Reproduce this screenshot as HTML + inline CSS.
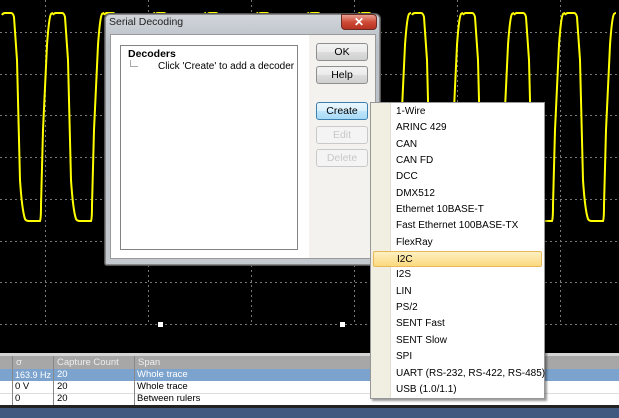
<!DOCTYPE html>
<html><head><meta charset="utf-8"><style>
*{margin:0;padding:0;box-sizing:border-box}
body{width:619px;height:418px;overflow:hidden;background:#000;position:relative;font-family:"Liberation Sans",sans-serif;font-size:11px;color:#000;white-space:nowrap}
.abs{position:absolute}
.btn{position:absolute;left:316px;width:52px;height:18px;border:1px solid #8e8f8f;border-radius:3px;background:linear-gradient(#f2f2f2,#ebebeb 50%,#dddddd 51%,#cfcfcf);text-align:center;line-height:16px;font-size:10.5px}
.dis{color:#c8c8c8;border-color:#c9c9c9;background:#f4f4f4}
.menu div{height:16.35px;line-height:16px;padding-left:25px;font-size:10px;white-space:nowrap}
.tbl div{position:absolute;font-size:9.5px;line-height:12px}
</style></head><body>
<svg class="abs" style="left:0;top:0" width="619" height="360">
<g stroke="#777" stroke-width="1" stroke-dasharray="2,3">
<line x1="0" y1="32.5" x2="619" y2="32.5"/><line x1="0" y1="74.5" x2="619" y2="74.5"/><line x1="0" y1="115.5" x2="619" y2="115.5"/><line x1="0" y1="157.5" x2="619" y2="157.5"/><line x1="0" y1="199.5" x2="619" y2="199.5"/><line x1="0" y1="241.5" x2="619" y2="241.5"/><line x1="0" y1="282.5" x2="619" y2="282.5"/><line x1="0" y1="324.5" x2="619" y2="324.5"/>
<line x1="45.5" y1="0" x2="45.5" y2="325"/><line x1="148.5" y1="0" x2="148.5" y2="325"/><line x1="251.5" y1="0" x2="251.5" y2="325"/><line x1="354.5" y1="0" x2="354.5" y2="325"/><line x1="457.5" y1="0" x2="457.5" y2="325"/><line x1="560.5" y1="0" x2="560.5" y2="325"/>
</g>
<defs><path id="p" fill="none" stroke="#ffff00" stroke-width="2" d="M-6,15 Q-5,13 -3,13 L3,13 Q5,13 6,17 L9,60 L12,180 Q14,210 17,219 Q18,221 21,221 L32,221 Q33,219 33,205 L35,130 L39,45 Q41,17 43,14 Q44,13 45,13"/></defs>
<use href="#p" x="8"/><use href="#p" x="59"/><use href="#p" x="110"/><use href="#p" x="161"/><use href="#p" x="213"/><use href="#p" x="264"/><use href="#p" x="315"/><use href="#p" x="366"/><use href="#p" x="418"/><use href="#p" x="469"/><use href="#p" x="520"/><use href="#p" x="571"/>
<rect x="158" y="322" width="5" height="5" fill="#fff"/><rect x="340" y="322" width="5" height="5" fill="#fff"/>
</svg>
<!-- table -->
<div class="abs" style="left:0;top:353px;width:619px;height:3px;background:#d4d4d4"></div>
<div class="abs tbl" style="left:0;top:356px;width:619px;height:52px;background:#fff">
<div style="left:0;top:0;width:619px;height:13px;background:#a7a7a7;color:#eee"></div>
<div style="left:0;top:13px;width:619px;height:12px;background:#7ba3cd"></div>
<div style="left:0;top:37px;width:619px;height:1px;background:#ddd"></div>
<div style="left:0;top:49px;width:619px;height:1px;background:#ddd"></div>
<div style="left:12px;top:0;width:1px;height:50px;background:#888"></div>
<div style="left:53px;top:0;width:1px;height:50px;background:#888"></div>
<div style="left:134px;top:0;width:1px;height:50px;background:#888"></div>
<div style="left:16px;top:1px;color:#eee">σ</div><div style="left:57px;top:1px;color:#eee">Capture Count</div><div style="left:138px;top:1px;color:#eee">Span</div>
<div style="left:15px;top:13px;color:#fff;font-size:9px">163.9 Hz</div><div style="left:57px;top:13px;color:#fff">20</div><div style="left:137px;top:13px;color:#fff">Whole trace</div>
<div style="left:15px;top:25px">0 V</div><div style="left:57px;top:25px">20</div><div style="left:137px;top:25px">Whole trace</div>
<div style="left:15px;top:37px">0</div><div style="left:57px;top:37px">20</div><div style="left:137px;top:37px">Between rulers</div>
</div>
<div class="abs" style="left:0;top:405px;width:619px;height:3px;background:#222"></div>
<div class="abs" style="left:0;top:408px;width:619px;height:10px;background:#41597f"></div>
<!-- dialog -->
<div class="abs" style="left:104px;top:13px;width:277px;height:253px;border:1px solid #555;border-radius:6px 6px 3px 3px;background:linear-gradient(#d2d6db,#b9c0c8 30px,#c4c9cf);box-shadow:0 0 0 1px #888 inset"></div>
<div class="abs" style="left:109px;top:16px;font-size:10.5px;color:#222">Serial Decoding</div>
<div class="abs" style="left:341px;top:14px;width:36px;height:16px;border:1px solid #6b2a22;border-radius:0 4px 4px 4px;background:linear-gradient(#e8a193,#cf4b37 50%,#b53220);color:#fff;text-align:center;font-weight:bold;font-size:12px;line-height:14px">✕</div>
<div class="abs" style="left:110px;top:34px;width:266px;height:225px;background:#f4f2ee;border:1px solid #999"></div>
<div class="abs" style="left:111px;top:35px;width:198px;height:223px;background:#fff"></div>
<div class="abs" style="left:120px;top:45px;width:178px;height:205px;background:#fff;border:1px solid #838383"></div>
<div class="abs" style="left:128px;top:48px;font-weight:bold;font-size:10.5px">Decoders</div>
<div class="abs" style="left:130px;top:60px;width:8px;height:7px;border-left:1px solid #aaa;border-bottom:1px solid #aaa"></div>
<div class="abs" style="left:158px;top:61px;font-size:10px">Click 'Create' to add a decoder</div>
<div class="btn" style="top:43px">OK</div>
<div class="btn" style="top:66px">Help</div>
<div class="btn" style="top:102px;border-color:#3c7fb1;background:linear-gradient(#eaf6fd,#d9f0fc 50%,#bee6fd 51%,#a7d9f5)">Create</div>
<div class="btn dis" style="top:126px">Edit</div>
<div class="btn dis" style="top:149px">Delete</div>
<!-- menu -->
<div class="abs menu" style="left:370px;top:102px;width:175px;height:297px;background:#fff;border:1px solid #979797;box-shadow:2px 2px 2px rgba(0,0,0,.4);padding-top:1px">
<div class="abs" style="left:0;top:0;width:20px;height:295px;padding:0;background:#f1efe2;border-right:1px solid #e2e0d3"></div>
<div style="position:relative">1-Wire</div><div style="position:relative">ARINC 429</div><div style="position:relative">CAN</div><div style="position:relative">CAN FD</div><div style="position:relative">DCC</div><div style="position:relative">DMX512</div><div style="position:relative">Ethernet 10BASE-T</div><div style="position:relative">Fast Ethernet 100BASE-TX</div><div style="position:relative">FlexRay</div>
<div style="position:relative;margin:0 2px;padding-left:23px;background:linear-gradient(#fdf0c2,#fbd97e);border:1px solid #e8b95a;border-radius:2px">I2C</div>
<div style="position:relative">I2S</div><div style="position:relative">LIN</div><div style="position:relative">PS/2</div><div style="position:relative">SENT Fast</div><div style="position:relative">SENT Slow</div><div style="position:relative">SPI</div><div style="position:relative">UART (RS-232, RS-422, RS-485)</div><div style="position:relative">USB (1.0/1.1)</div>
</div>
</body></html>
